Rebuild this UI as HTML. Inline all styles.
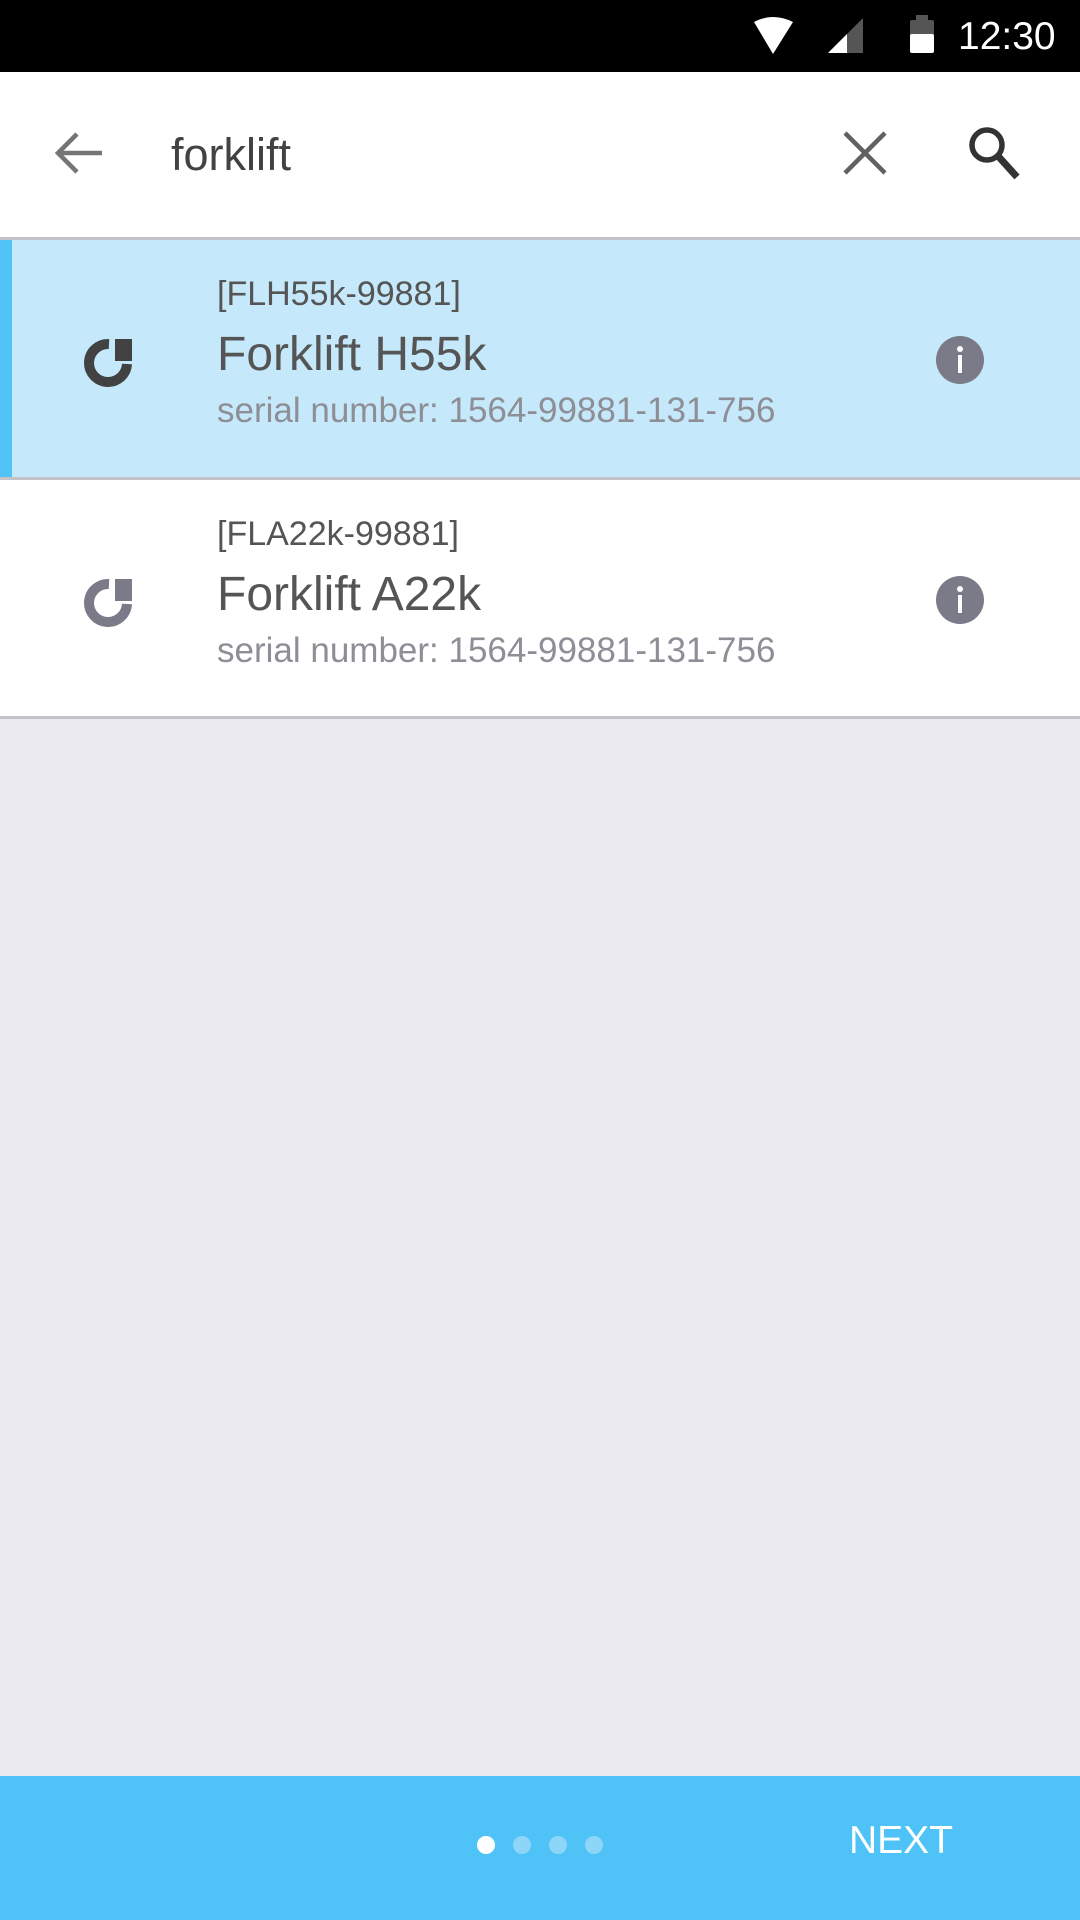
<!DOCTYPE html>
<html><head><meta charset="utf-8"><style>
*{margin:0;padding:0;box-sizing:border-box}
body{width:1080px;height:1920px;background:#ebebf1;position:relative;overflow:hidden;font-family:"Liberation Sans",sans-serif}
.a{position:absolute;white-space:nowrap}
</style></head><body>
<div class="a" style="left:0;top:0;width:1080px;height:72px;background:#000"></div>
<svg class="a" style="left:750px;top:14px" width="190" height="42" viewBox="0 0 190 42">
<path d="M4 8 Q23 -2 43 8 L23 40 Z" fill="#fff"/>
<path d="M78 39 L113 4 L113 39 Z" fill="#555"/>
<path d="M78 39 L97 20 L97 39 Z" fill="#fff"/>
<rect x="160" y="6" width="24" height="33" rx="2" fill="#555"/>
<rect x="166" y="1" width="12" height="6" fill="#555"/>
<rect x="160" y="20" width="24" height="19" rx="2" fill="#fff"/>
</svg>
<div class="a" style="left:958px;top:15px;font-size:39px;color:#fff">12:30</div>
<div class="a" style="left:0;top:72px;width:1080px;height:165px;background:#fff"></div>
<svg class="a" style="left:50px;top:128px" width="60" height="52" viewBox="0 0 60 52"><path d="M52 25 H10 M27 6 L8 25 L27 44" stroke="#757575" stroke-width="4.5" fill="none"/></svg>
<div class="a" style="left:171px;top:129px;font-size:45px;color:#424242">forklift</div>
<svg class="a" style="left:840px;top:130px" width="50" height="46" viewBox="0 0 50 46"><path d="M5 3 L45 43 M45 3 L5 43" stroke="#616161" stroke-width="4.5"/></svg>
<svg class="a" style="left:965px;top:124px" width="60" height="58" viewBox="0 0 60 58"><circle cx="22" cy="21" r="15" stroke="#333" stroke-width="5.5" fill="none"/><path d="M33 32 L52 53" stroke="#333" stroke-width="7"/></svg>
<div class="a" style="left:0;top:237px;width:1080px;height:3px;background:#c4c4c8"></div>
<div class="a" style="left:0;top:240px;width:1080px;height:237px;background:#c5e9fa"></div>
<div class="a" style="left:0;top:240px;width:12px;height:237px;background:#4fc3f7"></div>
<div class="a" style="left:0;top:477px;width:1080px;height:3px;background:#c4c4c8"></div>
<div class="a" style="left:0;top:480px;width:1080px;height:236px;background:#fff"></div>
<div class="a" style="left:0;top:716px;width:1080px;height:3px;background:#c4c4c8"></div>

<svg class="a" style="left:82px;top:336px" width="54" height="54" viewBox="0 0 54 54"><path d="M27 8 A19 19 0 1 0 45 28" stroke="#424242" stroke-width="10" fill="none"/><rect x="33" y="3" width="17" height="22" fill="#424242"/></svg>
<div class="a" style="left:217px;top:275px;font-size:34px;color:#555">[FLH55k-99881]</div>
<div class="a" style="left:217px;top:327px;font-size:48px;color:#555">Forklift H55k</div>
<div class="a" style="left:217px;top:391px;font-size:35px;color:#8e8e96">serial number: 1564-99881-131-756</div>
<svg class="a" style="left:936px;top:336px" width="48" height="48" viewBox="0 0 48 48"><circle cx="24" cy="24" r="24" fill="#7a7a88"/><circle cx="24" cy="13" r="3" fill="#fff"/><rect x="22" y="19" width="4" height="18" fill="#fff"/></svg>

<svg class="a" style="left:82px;top:576px" width="54" height="54" viewBox="0 0 54 54"><path d="M27 8 A19 19 0 1 0 45 28" stroke="#7a7a88" stroke-width="10" fill="none"/><rect x="33" y="3" width="17" height="22" fill="#7a7a88"/></svg>
<div class="a" style="left:217px;top:515px;font-size:34px;color:#555">[FLA22k-99881]</div>
<div class="a" style="left:217px;top:567px;font-size:48px;color:#555">Forklift A22k</div>
<div class="a" style="left:217px;top:631px;font-size:35px;color:#8e8e96">serial number: 1564-99881-131-756</div>
<svg class="a" style="left:936px;top:576px" width="48" height="48" viewBox="0 0 48 48"><circle cx="24" cy="24" r="24" fill="#7a7a88"/><circle cx="24" cy="13" r="3" fill="#fff"/><rect x="22" y="19" width="4" height="18" fill="#fff"/></svg>

<div class="a" style="left:0;top:1776px;width:1080px;height:144px;background:#4fc3f7"></div>
<svg class="a" style="left:470px;top:1830px" width="140" height="30" viewBox="0 0 140 30"><circle cx="16" cy="15" r="9" fill="#fff"/><circle cx="52" cy="15" r="9" fill="#8ed6f8"/><circle cx="88" cy="15" r="9" fill="#8ed6f8"/><circle cx="124" cy="15" r="9" fill="#8ed6f8"/></svg>
<div class="a" style="left:849px;top:1819px;font-size:39px;color:#fff">NEXT</div>
</body></html>
